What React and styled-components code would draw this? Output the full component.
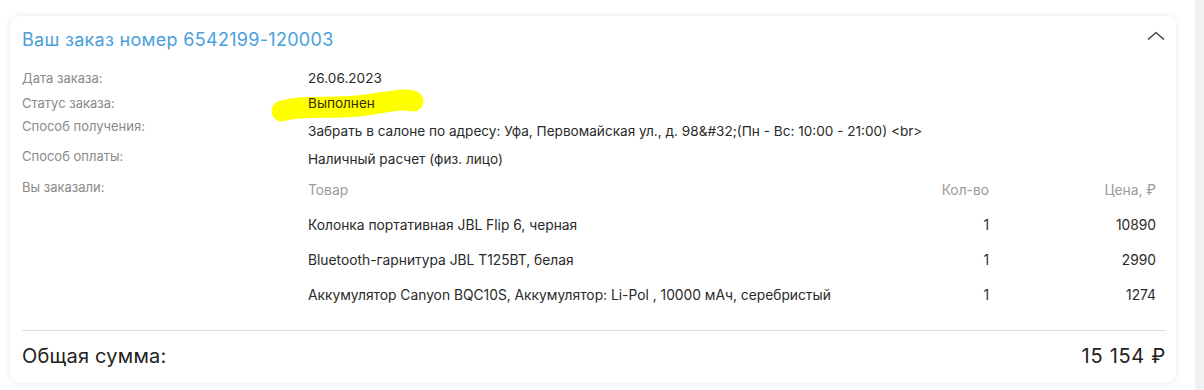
import React from "react";
import styled, { createGlobalStyle } from "styled-components";

const Global = createGlobalStyle`
  html, body { margin: 0; padding: 0; background: #fff; }
  body { font-family: Inter, "Noto Sans", Arial, sans-serif; color: #222; }
`;

const Page = styled.div`
  display: flex;
  width: 1204px;
  height: 390px;
  overflow: hidden;
`;

const Main = styled.main`
  flex: 1;
  padding: 16px 19px 0 10px;
`;

const Gutter = styled.div`
  width: 9px;
  background: #f1f1f1;
`;

const Card = styled.section`
  background: #fff;
  border-radius: 10px;
  box-shadow: 0 0 6px rgba(0, 0, 0, 0.09);
  height: 367px;
  box-sizing: border-box;
  padding: 11px 10px 0 12px;
  display: flex;
  flex-direction: column;
`;

const Header = styled.div`
  display: flex;
  align-items: center;
  justify-content: space-between;
  height: 24px;
`;

const Title = styled.h2`
  margin: 0;
  font-size: 18px;
  font-weight: 400;
  color: #4aa0dc;
  letter-spacing: 0.3px;
`;

const Toggle = styled.button`
  border: 0;
  background: none;
  padding: 0;
  margin: -6px 1px 0 0;
  width: 18px;
  height: 10px;
  display: flex;
  cursor: pointer;
`;

const Info = styled.div`
  display: grid;
  grid-template-columns: 286px 1fr;
  margin-top: 17px;
  font-size: 13px;
`;

const Label = styled.div`
  color: #8a8a8a;
  height: ${(p) => (p.$h ? `${p.$h}px` : "auto")};
  line-height: 20px;
`;

const Value = styled.div`
  color: #2a2a2a;
  font-size: 13.6px;
  height: ${(p) => p.$h}px;
  line-height: 20px;
  padding-top: ${(p) => p.$pt || 0}px;
  box-sizing: border-box;
`;

const Marked = styled.span`
  position: relative;
  display: inline-block;
  color: #3a2a00;
  z-index: 0;
`;

const Stroke = styled.svg`
  position: absolute;
  left: -38px;
  top: 0;
  width: 156px;
  height: 34px;
  z-index: -1;
  overflow: visible;
`;

const Table = styled.div`
  display: grid;
  grid-template-columns: 1fr 120px 167px;
  width: 848px;
  font-size: 13.8px;
`;

const Cell = styled.div`
  height: ${(p) => (p.$head ? 30 : 35)}px;
  display: flex;
  align-items: ${(p) => (p.$head ? "flex-start" : "center")};
  line-height: ${(p) => (p.$head ? "26px" : "20px")};
  justify-content: ${(p) => (p.$right ? "flex-end" : "flex-start")};
  color: ${(p) => (p.$head ? "#9a9a9a" : "#2a2a2a")};
`;

const Divider = styled.hr`
  border: 0;
  border-top: 1px solid #dcdcdc;
  margin: 18px 0 0;
`;

const Total = styled.div`
  display: flex;
  justify-content: space-between;
  align-items: center;
  height: 50px;
  font-size: 20px;
  color: #222;
  letter-spacing: 0.2px;
`;

const Sum = styled.span`
  letter-spacing: 0.7px;
`;

const items = [
  ["Колонка портативная JBL Flip 6, черная", "1", "10890"],
  ["Bluetooth-гарнитура JBL T125BT, белая", "1", "2990"],
  ["Аккумулятор Canyon BQC10S, Аккумулятор: Li-Pol , 10000 мАч, серебристый", "1", "1274"],
];

export default function App() {
  return (
    <>
      <Global />
      <Page>
        <Main>
          <Card>
            <Header>
              <Title>Ваш заказ номер 6542199-120003</Title>
              <Toggle aria-label="Свернуть">
                <svg width="18" height="10" viewBox="0 0 18 10">
                  <path d="M1 8.5 L9 1.5 L17 8.5" fill="none" stroke="#333" strokeWidth="1.3" />
                </svg>
              </Toggle>
            </Header>
            <Info>
              <Label $h={25}>Дата заказа:</Label>
              <Value $h={25}>26.06.2023</Value>
              <Label $h={23}>Статус заказа:</Label>
              <Value $h={23}>
                <Marked>
                  <Stroke viewBox="0 0 156 34">
                    <path
                      d="M12 18 C 36 11, 62 17, 96 12 S 132 6, 143 8"
                      fill="none"
                      stroke="#ffff00"
                      strokeWidth="21"
                      strokeLinecap="round"
                    />
                  </Stroke>
                  Выполнен
                </Marked>
              </Value>
              <Label $h={30}>Способ получения:</Label>
              <Value $h={30} $pt={5}>
                Забрать в салоне по адресу: Уфа, Первомайская ул., д. 98&amp;#32;(Пн - Вс: 10:00 - 21:00) &lt;br&gt;
              </Value>
              <Label $h={31}>Способ оплаты:</Label>
              <Value $h={31} $pt={3}>Наличный расчет (физ. лицо)</Value>
              <Label>Вы заказали:</Label>
              <Table>
                <Cell $head>Товар</Cell>
                <Cell $head $right>Кол-во</Cell>
                <Cell $head $right>Цена, ₽</Cell>
                {items.map(([n, q, p]) => (
                  <React.Fragment key={n}>
                    <Cell>{n}</Cell>
                    <Cell $right>{q}</Cell>
                    <Cell $right>{p}</Cell>
                  </React.Fragment>
                ))}
              </Table>
            </Info>
            <Divider />
            <Total>
              <span>Общая сумма:</span>
              <Sum>15 154 ₽</Sum>
            </Total>
          </Card>
        </Main>
        <Gutter />
      </Page>
    </>
  );
}
